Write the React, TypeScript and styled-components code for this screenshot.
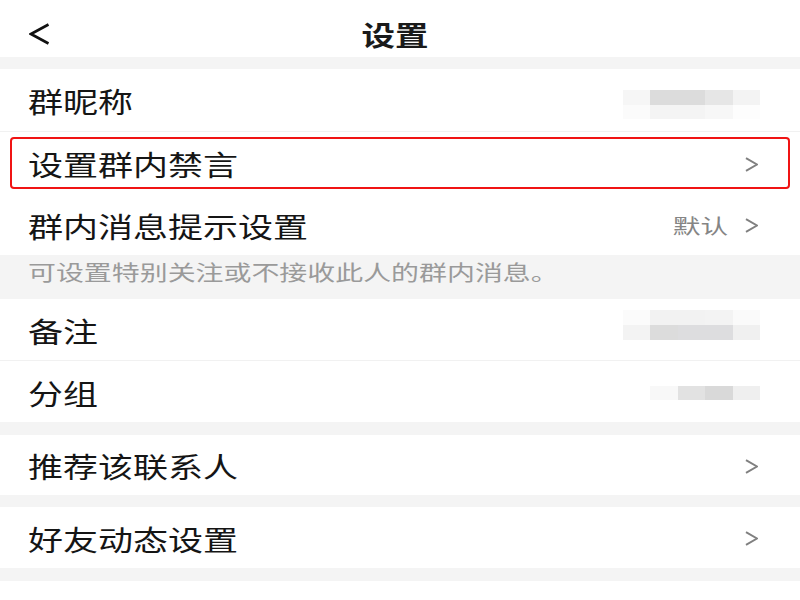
import React from "react";
import styled, { createGlobalStyle } from "styled-components";

const GlobalStyle = createGlobalStyle`
    html, body {
        margin: 0;
        padding: 0;
        background: #f4f4f4;
    }
    body {
        font-family: "Noto Sans CJK SC", "Noto Sans", sans-serif;
    }
`;

const Page = styled.div`
    width: 800px;
    height: 600px;
    overflow: hidden;
    background: #f4f4f4;
    display: flex;
    flex-direction: column;
`;

const Header = styled.div`
    height: 58px;
    background: #fff;
    display: grid;
    grid-template-columns: 1fr auto 1fr;
    align-items: center;
    padding: 12px 29px 0 29px;
    box-sizing: border-box;
`;

const BackButton = styled.div`
    display: flex;
    align-items: center;
`;

const Title = styled.div`
    font-size: 27px;
    font-weight: bold;
    color: #1a1a1a;
    transform: scaleX(1.24);
    margin-right: 11px;
    line-height: 1;
`;

const Group = styled.div<{ $gap?: number }>`
    background: #fff;
    margin-top: ${(p) => p.$gap ?? 0}px;
    display: flex;
    flex-direction: column;
`;

const Row = styled.div<{ $h?: number; $line?: boolean; $marked?: boolean }>`
    position: relative;
    height: ${(p) => p.$h ?? 61}px;
    padding: 3px 42px 0 28px;
    display: flex;
    align-items: center;
    justify-content: space-between;
    box-sizing: border-box;
    border-bottom: ${(p) => (p.$line ? "1px solid #f1f1f1" : "none")};

    &::after {
        content: "";
        display: ${(p) => (p.$marked ? "block" : "none")};
        position: absolute;
        left: 10px;
        right: 10px;
        top: 5px;
        bottom: 5px;
        border: 2px solid #f01414;
        border-radius: 4px;
    }
`;

const Label = styled.span`
    display: inline-block;
    font-size: 28px;
    color: #151515;
    transform: scaleX(1.25);
    transform-origin: left center;
    line-height: 1;
`;

const Right = styled.div`
    display: flex;
    align-items: center;
    gap: 17px;
`;

const Value = styled.span`
    display: inline-block;
    font-size: 20px;
    color: #858585;
    transform: scaleX(1.38);
    transform-origin: right center;
    line-height: 1;
`;

const Note = styled.div`
    height: 45px;
    padding: 0 28px;
    display: flex;
    align-items: center;
`;

const NoteText = styled.span`
    display: inline-block;
    font-size: 21px;
    color: #9a9a9a;
    transform: scaleX(1.33);
    transform-origin: left center;
    line-height: 1;
    margin-top: -10px;
`;

const Mosaic = styled.div<{ $shift: number }>`
    display: flex;
    flex-direction: column;
    margin-right: -2px;
    margin-top: ${(p) => p.$shift * 2}px;
`;

const MosaicRow = styled.div`
    display: flex;
`;

const Cell = styled.div<{ $c: string; $h: number }>`
    width: 27.5px;
    height: ${(p) => p.$h}px;
    background: ${(p) => p.$c};
`;

const Spacer = styled.div<{ $h: number }>`
    height: ${(p) => p.$h}px;
    background: #fff;
    margin-top: 13px;
`;

const Chevron = () => (
    <svg width="13" height="15" viewBox="0 0 13 15">
        <polyline points="1,1.2 12,7.5 1,13.8" fill="none" stroke="#808080" strokeWidth="2" />
    </svg>
);

type MosaicProps = { shift: number; rows: { h: number; cells: string[] }[] };

const Blur = ({ rows, shift }: MosaicProps) => (
    <Mosaic $shift={shift}>
        {rows.map((r, i) => (
            <MosaicRow key={i}>
                {r.cells.map((c, j) => (
                    <Cell key={j} $c={c} $h={r.h} />
                ))}
            </MosaicRow>
        ))}
    </Mosaic>
);

const nickBlur = [
    { h: 15, cells: ["#f6f6f6", "#dcdcdc", "#dcdcdc", "#e6e6e6", "#f3f3f3"] },
    { h: 14, cells: ["#fbfbfb", "#f4f4f4", "#f4f4f4", "#f7f7f7", "#fdfdfd"] },
];

const remarkBlur = [
    { h: 15, cells: ["#fbfbfb", "#f2f2f2", "#f2f2f2", "#f3f3f3", "#fafafa"] },
    { h: 15, cells: ["#f3f3f3", "#dcdcdc", "#dddddf", "#dddddf", "#f0f0f0"] },
];

const groupBlur = [{ h: 14, cells: ["#ffffff", "#f8f8f8", "#e2e2e2", "#d9d9d9", "#efefef"] }];

export default function App() {
    return (
        <>
            <GlobalStyle />
            <Page>
                <Header>
                    <BackButton>
                        <svg width="21" height="22" viewBox="0 0 21 22">
                            <polyline points="19.5,1.5 2,11 19.5,20.5" fill="none" stroke="#111" strokeWidth="2.6" />
                        </svg>
                    </BackButton>
                    <Title>设置</Title>
                    <div />
                </Header>

                <Group $gap={12}>
                    <Row $h={63} $line>
                        <Label>群昵称</Label>
                        <Blur rows={nickBlur} shift={3.5} />
                    </Row>
                    <Row $h={62} $marked>
                        <Label>设置群内禁言</Label>
                        <Chevron />
                    </Row>
                    <Row $h={61}>
                        <Label>群内消息提示设置</Label>
                        <Right>
                            <Value>默认</Value>
                            <Chevron />
                        </Right>
                    </Row>
                </Group>

                <Note>
                    <NoteText>可设置特别关注或不接收此人的群内消息。</NoteText>
                </Note>

                <Group>
                    <Row $h={62} $line>
                        <Label>备注</Label>
                        <Blur rows={remarkBlur} shift={-5.5} />
                    </Row>
                    <Row $h={61}>
                        <Label>分组</Label>
                        <Blur rows={groupBlur} shift={0} />
                    </Row>
                </Group>

                <Group $gap={13}>
                    <Row $h={60}>
                        <Label>推荐该联系人</Label>
                        <Chevron />
                    </Row>
                </Group>

                <Group $gap={12}>
                    <Row $h={61}>
                        <Label>好友动态设置</Label>
                        <Chevron />
                    </Row>
                </Group>

                <Spacer $h={20} />
            </Page>
        </>
    );
}
